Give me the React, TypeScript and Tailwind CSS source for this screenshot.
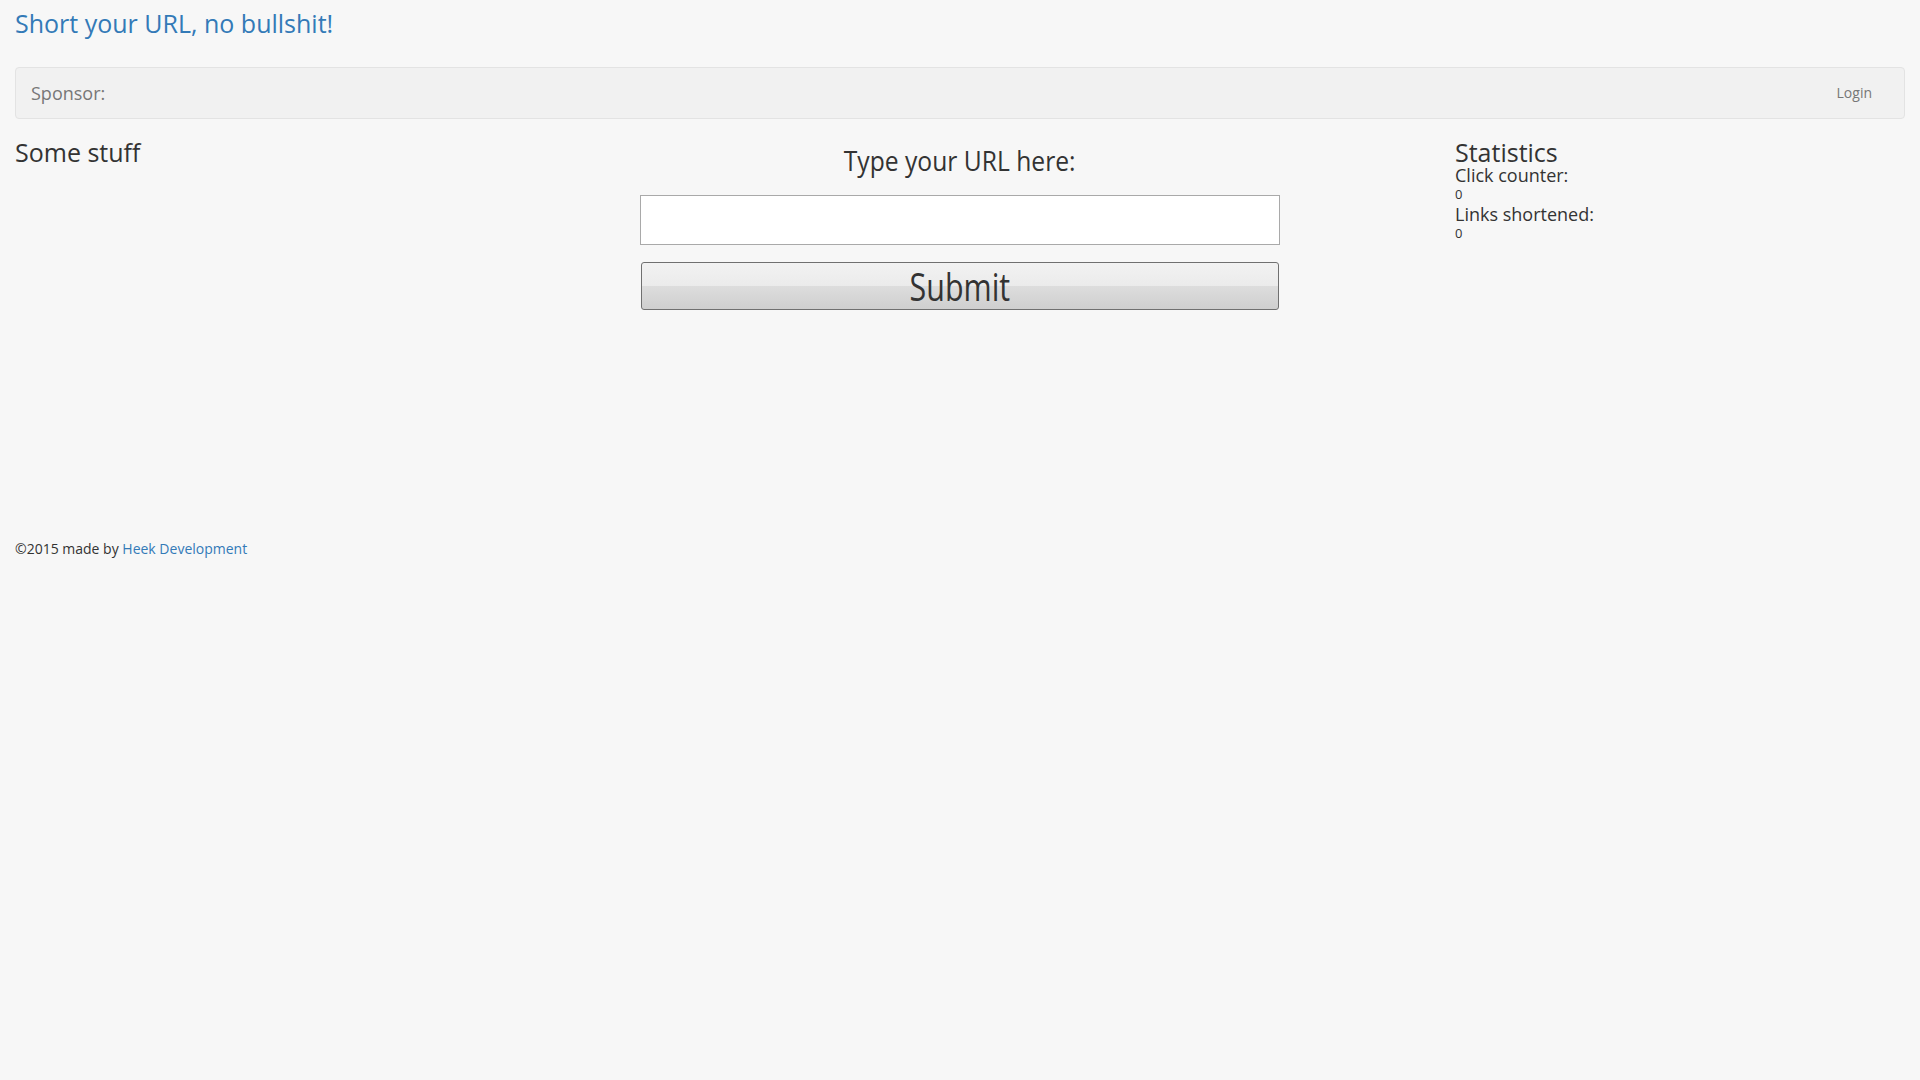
import React from "react";

export default function App() {
  return (
    <div
      className="min-h-screen bg-[#f7f7f7] px-[15px] text-[#333333]"
      style={{ fontFamily: '"Open Sans", "Liberation Sans", sans-serif' }}
    >
      {/* Title */}
      <div className="pt-[9px] pb-[30px] text-[25px] leading-[28px] text-[#337ab7]">
        Short your URL, no bullshit!
      </div>

      {/* Navbar */}
      <div className="flex h-[52px] items-center justify-between rounded-[4px] border border-[#e3e3e3] bg-[#f1f1f1]">
        <span className="pl-[15px] text-[18px] leading-[20px] text-[#777777]">Sponsor:</span>
        <span className="pr-[32px] text-[14px] leading-[20px] text-[#777777]">Login</span>
      </div>

      {/* Main row */}
      <div className="-mx-[15px] mt-[20px] grid h-[400px] grid-cols-4">
        <div className="px-[15px]">
          <div className="text-[25px] leading-[26px]">Some stuff</div>
        </div>

        <div className="col-span-2 flex flex-col items-center px-[15px]">
          <div className="pt-[5px] text-[28px] leading-[32px]">
            <span className="inline-block scale-x-[0.88]">Type your URL here:</span>
          </div>
          <input
            type="text"
            className="mt-[19px] h-[50px] w-[640px] border border-[#a9a9a9] bg-white outline-none"
          />
          <button
            type="button"
            className="mt-[17px] flex h-[48px] w-[638px] items-center justify-center rounded-[3px] border border-[#707070] bg-[linear-gradient(to_bottom,#f2f2f2_0%,#ebebeb_50%,#dddddd_50%,#cfcfcf_100%)] text-[#333333]"
          >
            <span className="inline-block scale-x-[0.8] text-[38px] leading-none">Submit</span>
          </button>
        </div>

        <div className="px-[15px]">
          <div className="text-[25px] leading-[26px]">Statistics</div>
          <div className="text-[18px] leading-[20px]">Click counter:</div>
          <div className="text-[13px] leading-[19px]">0</div>
          <div className="text-[18px] leading-[20px]">Links shortened:</div>
          <div className="text-[13px] leading-[19px]">0</div>
        </div>
      </div>

      {/* Footer */}
      <div className="text-[14px] leading-[20px]">
        ©2015 made by <a className="text-[#337ab7]">Heek Development</a>
      </div>
    </div>
  );
}
